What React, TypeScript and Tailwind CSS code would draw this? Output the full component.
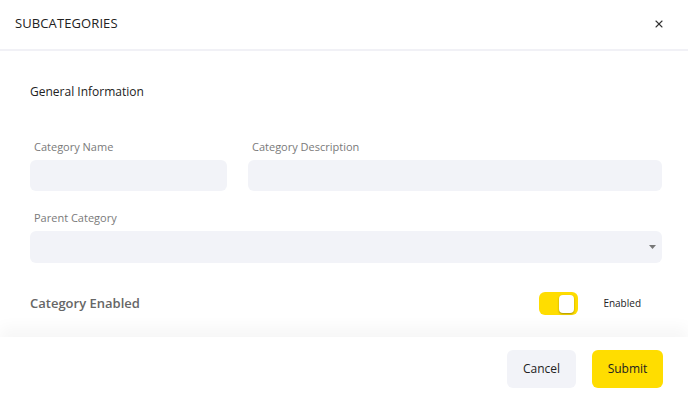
import { X } from "lucide-react";

const Field = ({ label, className }: { label: string; className?: string }) => (
    <div className={className}>
        <p className="pl-[4px] text-[11px] leading-[16px] text-[#7a7a7a]">{label}</p>
        <div className="mt-[5px] h-[31px] rounded-[6px] bg-[#f2f3f8]" />
    </div>
);

export default function App() {
    return (
        <div className="w-[688px] h-[393px] bg-white flex flex-col overflow-hidden" style={{ fontFamily: '"Open Sans", sans-serif' }}>
            {/* header */}
            <div className="h-[51px] shrink-0 flex items-center justify-between pl-[15px] pr-[23px] border-b-2 border-[#f1f1f6]">
                <p className="text-[13px] text-[#222] tracking-[0.1px] -mt-[2px]">SUBCATEGORIES</p>
                <X size={12} strokeWidth={2.2} className="text-[#333] -mt-[2px]" />
            </div>

            {/* body */}
            <div className="flex-1 pl-[30px] pr-[26px] pt-[32px]">
                <p className="text-[12px] leading-[18px] font-medium text-[#222]">General Information</p>

                <div className="mt-[38px] grid grid-cols-[197px_1fr] gap-x-[21px]">
                    <Field label="Category Name" />
                    <Field label="Category Description" />
                </div>

                <div className="mt-[19px]">
                    <p className="pl-[4px] text-[11px] leading-[16px] text-[#7a7a7a]">Parent Category</p>
                    <div className="mt-[5px] h-[32px] rounded-[6px] bg-[#f2f3f8] flex items-center justify-end pr-[6px]">
                        <svg width="7" height="4" viewBox="0 0 7 4">
                            <path d="M0 0 L7 0 L3.5 4 Z" fill="#777" />
                        </svg>
                    </div>
                </div>

                <div className="mt-[29px] flex items-center justify-between">
                    <p className="text-[13px] font-semibold text-[#666]">Category Enabled</p>
                    <div className="flex items-center mr-[21px]">
                        <div className="w-[39px] h-[23px] rounded-[6px] bg-[#ffdd00] flex items-center justify-end pr-[4px]">
                            <div className="w-[15px] h-[18px] rounded-[4px] bg-white shadow-[0_1px_2px_rgba(0,0,0,0.35)]" />
                        </div>
                        <p className="ml-[25px] text-[10px] font-medium text-[#222]">Enabled</p>
                    </div>
                </div>
            </div>

            {/* footer */}
            <div className="h-[56px] shrink-0 bg-white shadow-[0_-10px_14px_rgba(0,0,0,0.035)] flex items-start justify-end gap-[16px] pt-[13px] pr-[25px]">
                <button className="w-[69px] h-[38px] rounded-[6px] bg-[#f2f3f8] text-[12px] font-medium text-[#222]">Cancel</button>
                <button className="w-[71px] h-[38px] rounded-[6px] bg-[#ffdd00] text-[12px] font-medium text-[#222]">Submit</button>
            </div>
        </div>
    );
}
